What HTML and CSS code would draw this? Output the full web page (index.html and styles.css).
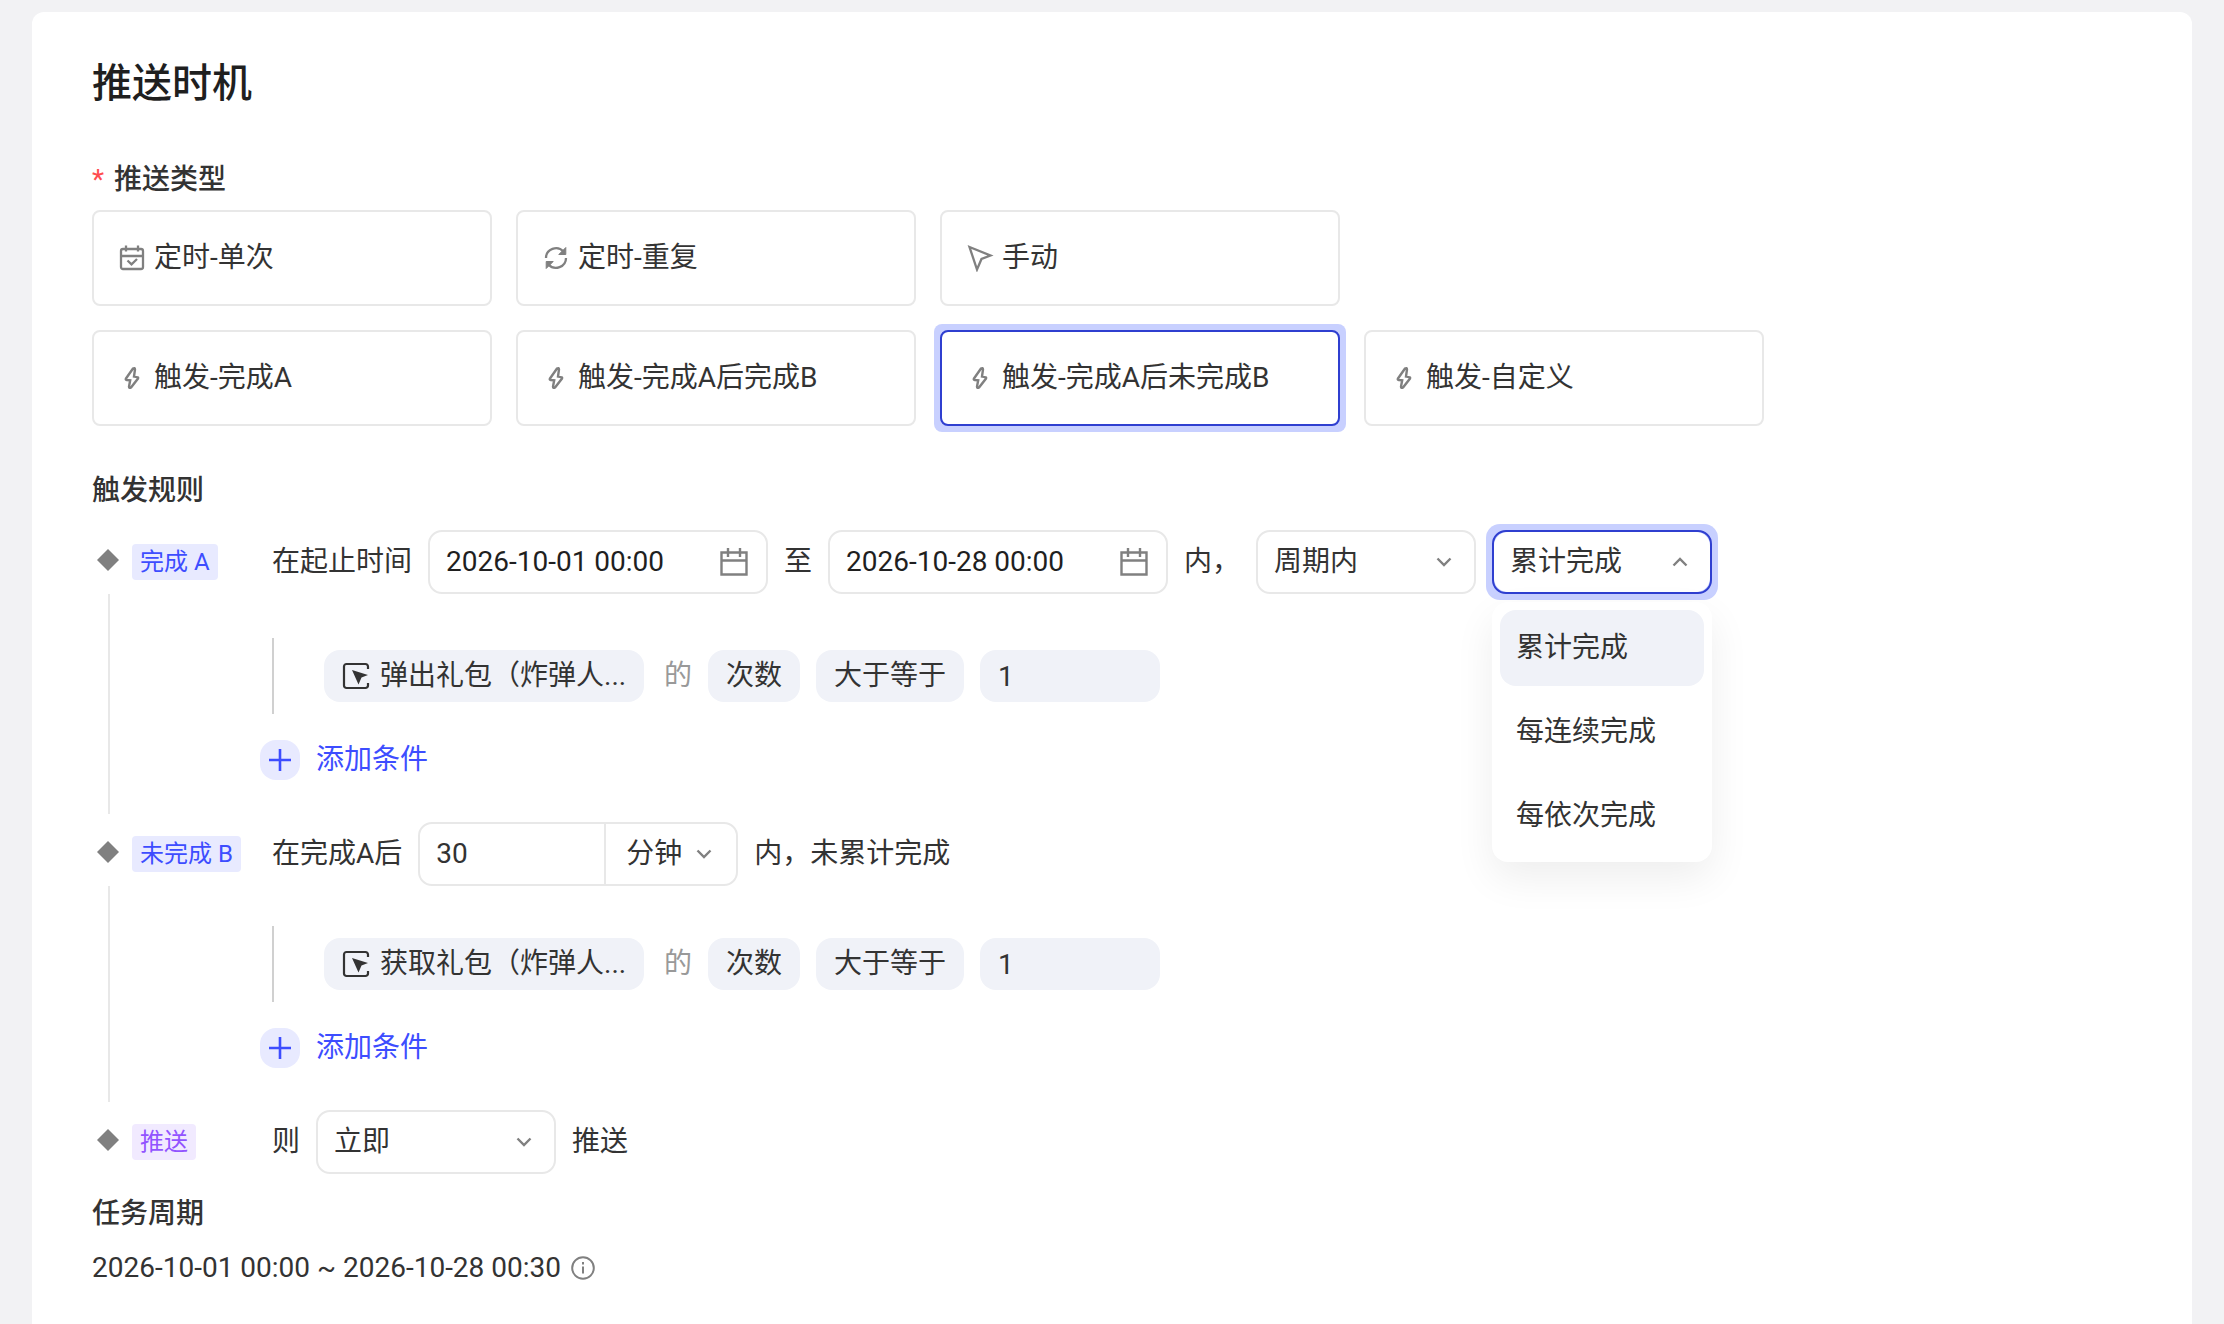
FILE: index.html
```html
<!DOCTYPE html>
<html lang="zh-CN">
<head>
<meta charset="utf-8">
<meta name="viewport" content="width=device-width, initial-scale=1">
<title>推送时机</title>
<link rel="stylesheet" href="styles.css">
</head>
<body>
<svg class="sprite" aria-hidden="true">
  <symbol id="i-calendar-check" viewBox="0 0 28 28"><path stroke-width="2.3" d="M5 5h18a2 2 0 0 1 2 2V23a2 2 0 0 1-2 2H5a2 2 0 0 1-2-2V7a2 2 0 0 1 2-2zM3 12h22M8 1.500v6M20 1.500v6M9.500 16.500l4 3.800 5.500-5.300"/></symbol>
  <symbol id="i-repeat" viewBox="0 0 28 28"><path stroke-width="2.3" d="M4 14A10 9.800 0 0 1 21.500 7.500M24 14A10 9.800 0 0 1 6.500 20.500"/><path class="head" stroke-width="1" d="M23.800 3.500v7h-7zM4.200 24.500v-7h7z"/></symbol>
  <symbol id="i-cursor" viewBox="0 0 28 28"><path stroke-width="2.3" d="M3.500 3l21 8.500-9 3.500-4.500 10.500z"/></symbol>
  <symbol id="i-bolt" viewBox="0 0 28 28"><path stroke-width="2.400" d="M15 4.500L8 14.500q-.8 1.300.7 1.500l3.500.3L11 22.500q0 2.200 2 1L20 14.500q.6-1.200-.8-1.400l-3.200-.6L17 5.500q0-2.200-2-1z"/></symbol>
  <symbol id="i-calendar" viewBox="0 0 28 28"><path stroke-width="2.400" d="M1.500 4.500h25v22h-25zM1.500 12.500h25M8 0v9M20 0v9"/></symbol>
  <symbol id="i-chevron" viewBox="0 0 16 16"><path stroke-width="2.400" d="M1.500 4.500L8 11l6.500-6.500"/></symbol>
  <symbol id="i-event" viewBox="0 0 28 28"><path stroke-width="2.200" d="M26 7V4.500a2.500 2.500 0 0 0-2.500-2.500h-19A2.500 2.500 0 0 0 2 4.500v19A2.500 2.500 0 0 0 4.500 26h19a2.500 2.500 0 0 0 2.500-2.500V21"/><path class="solid" d="M10 8l16 5-6.500 2.500-3 7z"/></symbol>
  <symbol id="i-plus" viewBox="0 0 24 24"><path stroke-width="2.600" d="M12 1v22M1 12h22"/></symbol>
  <symbol id="i-info" viewBox="0 0 24 24"><circle cx="12" cy="12" r="10.800"/><path d="M12 10.500v7M12 6v2.500"/></symbol>
  <symbol id="i-diamond" viewBox="0 0 32 32"><path d="M16 3l11 11-11 11L5 14z"/></symbol>
</svg>

<main class="panel">
  <h1 class="panel-title">推送时机</h1>

  <form>
    <fieldset class="types">
      <legend class="section-title"><span class="required">*</span>推送类型</legend>
      <div class="type-row">
        <label class="type"><input type="radio" name="type"><svg class="icon"><use href="#i-calendar-check"/></svg>定时-单次</label>
        <label class="type"><input type="radio" name="type"><svg class="icon"><use href="#i-repeat"/></svg>定时-重复</label>
        <label class="type"><input type="radio" name="type"><svg class="icon"><use href="#i-cursor"/></svg>手动</label>
      </div>
      <div class="type-row">
        <label class="type"><input type="radio" name="type"><svg class="icon"><use href="#i-bolt"/></svg>触发-完成A</label>
        <label class="type"><input type="radio" name="type"><svg class="icon"><use href="#i-bolt"/></svg>触发-完成A后完成B</label>
        <label class="type"><input type="radio" name="type" checked><svg class="icon"><use href="#i-bolt"/></svg>触发-完成A后未完成B</label>
        <label class="type"><input type="radio" name="type"><svg class="icon"><use href="#i-bolt"/></svg>触发-自定义</label>
      </div>
    </fieldset>

    <h2 class="section-title rules-title">触发规则</h2>

    <section class="step">
      <div class="marker"><svg class="diamond"><use href="#i-diamond"/></svg><span class="tag">完成 A</span></div>
      <div class="line-row">
        <label for="start">在起止时间</label>
        <span class="field date"><input id="start" type="text" value="2026-10-01 00:00"><svg class="icon"><use href="#i-calendar"/></svg></span>
        <label for="end">至</label>
        <span class="field date"><input id="end" type="text" value="2026-10-28 00:00"><svg class="icon"><use href="#i-calendar"/></svg></span>
        <label for="range">内，</label>
        <span class="field choice"><select id="range"><option>周期内</option></select><svg class="chevron"><use href="#i-chevron"/></svg></span>
        <span class="field choice open">
          <select aria-label="完成方式"><option>累计完成</option><option>每连续完成</option><option>每依次完成</option></select><svg class="chevron"><use href="#i-chevron"/></svg>
          <ul class="menu" role="listbox" aria-label="完成方式">
            <li role="option" aria-selected="true">累计完成</li>
            <li role="option" aria-selected="false">每连续完成</li>
            <li role="option" aria-selected="false">每依次完成</li>
          </ul>
        </span>
      </div>
      <div class="rail"></div>
      <div class="body body-first">
        <div class="condition">
          <button type="button" class="pill event"><svg class="icon"><use href="#i-event"/></svg>弹出礼包（炸弹人...</button>
          <span class="of">的</span>
          <button type="button" class="pill">次数</button>
          <button type="button" class="pill">大于等于</button>
          <input class="pill value" type="text" value="1" aria-label="次数值">
        </div>
        <button type="button" class="add"><span class="add-icon"><svg><use href="#i-plus"/></svg></span>添加条件</button>
      </div>
    </section>

    <section class="step">
      <div class="marker"><svg class="diamond"><use href="#i-diamond"/></svg><span class="tag">未完成 B</span></div>
      <div class="line-row">
        <label for="delay">在完成A后</label>
        <span class="field combo">
          <input id="delay" type="text" value="30">
          <span class="unit"><select aria-label="时间单位"><option>分钟</option></select><svg class="chevron"><use href="#i-chevron"/></svg></span>
        </span>
        <span>内，未累计完成</span>
      </div>
      <div class="rail"></div>
      <div class="body">
        <div class="condition">
          <button type="button" class="pill event"><svg class="icon"><use href="#i-event"/></svg>获取礼包（炸弹人...</button>
          <span class="of">的</span>
          <button type="button" class="pill">次数</button>
          <button type="button" class="pill">大于等于</button>
          <input class="pill value" type="text" value="1" aria-label="次数值">
        </div>
        <button type="button" class="add"><span class="add-icon"><svg><use href="#i-plus"/></svg></span>添加条件</button>
      </div>
    </section>

    <section class="step">
      <div class="marker"><svg class="diamond"><use href="#i-diamond"/></svg><span class="tag tag-push">推送</span></div>
      <div class="line-row">
        <label for="when">则</label>
        <span class="field choice wide"><select id="when"><option>立即</option></select><svg class="chevron"><use href="#i-chevron"/></svg></span>
        <span>推送</span>
      </div>
    </section>

    <h2 class="section-title period-title">任务周期</h2>
    <p class="period">2026-10-01 00:00 ~ 2026-10-28 00:30<svg class="info"><use href="#i-info"/></svg></p>
  </form>
</main>
</body>
</html>
```
FILE: styles.css
```css
:root {
  --ink: #333;
  --muted: #808080;
  --border: #e8e8e8;
  --blue: #3d4dff;
  --blue-deep: #2f3fd0;
  --ring: #c8d0ff;
  --fill: #f0f2f8;
}

* { box-sizing: border-box; }

body {
  margin: 0;
  padding: 12px 32px 0;
  background: #f2f2f4;
  color: var(--ink);
  font: 28px/44px Roboto, "Noto Sans CJK SC", sans-serif;
}

h1, h2, p, ul, fieldset, legend { margin: 0; padding: 0; border: 0; }

input, select, button {
  margin: 0;
  padding: 0;
  border: 0;
  background: none;
  color: inherit;
  font: inherit;
  appearance: none;
  outline: none;
}

svg { flex: none; fill: none; stroke: var(--muted); stroke-width: 2; }
.sprite { position: absolute; width: 0; height: 0; }
.solid { fill: var(--ink); stroke: none; }
.head { fill: var(--muted); }
.icon { width: 28px; height: 28px; }

.panel {
  min-height: calc(100vh - 12px);
  padding: 44px 60px 16px;
  border-radius: 12px 12px 0 0;
  background: #fff;
}

.panel-title {
  margin-bottom: 46px;
  color: #1f1f1f;
  font-size: 40px;
  line-height: 56px;
  font-weight: 500;
}

.section-title { font-size: 28px; line-height: 44px; font-weight: 500; }
.required { margin-right: 10px; color: #ff4d4f; font-weight: 400; }

.type-row { display: flex; flex-wrap: wrap; gap: 24px; margin-top: 24px; }
legend + .type-row { margin-top: 8px; }

.type {
  position: relative;
  display: flex;
  align-items: center;
  gap: 8px;
  width: 400px;
  height: 96px;
  padding: 0 24px;
  border: 2px solid var(--border);
  border-radius: 8px;
  background: #fff;
}
.type input { position: absolute; opacity: 0; }
.type:has(:checked) { border-color: var(--blue-deep); }

/* focus halo behind the selected card and the open drop-down */
form { position: relative; z-index: 0; }
.type:has(:checked)::before,
.open::before {
  content: "";
  position: absolute;
  inset: -8px;
  z-index: -2;
  border-radius: 8px;
  background: var(--ring);
}
.type:has(:checked)::after,
.open::after {
  content: "";
  position: absolute;
  inset: 0;
  z-index: -1;
  border-radius: 6px;
  background: #fff;
}
.type:has(:checked), .open { background: none; }
.open::before, .open::after { border-radius: 14px; }

.rules-title { margin: 43px 0 17px; }

.step { display: grid; grid-template-columns: 180px 1fr; }
.marker { display: flex; align-items: center; gap: 8px; }
.diamond { width: 32px; height: 32px; fill: var(--muted); stroke: none; }

.tag {
  padding: 0 8px;
  border-radius: 4px;
  background: #e8eaff;
  color: var(--blue);
  font-size: 24px;
  line-height: 36px;
  white-space: nowrap;
}
.tag-push { background: #f1eaff; color: #9254ff; }

.line-row { display: flex; align-items: center; gap: 16px; }

.field {
  position: relative;
  display: flex;
  align-items: center;
  height: 64px;
  border: 2px solid var(--border);
  border-radius: 14px;
}
.date { width: 340px; padding: 0 18px 0 16px; color: #1f1f1f; }
.date input { flex: 1; min-width: 0; }

.choice { width: 220px; }
.choice select { width: 100%; height: 100%; padding: 0 48px 0 16px; }
.wide { width: 240px; }
.chevron { width: 16px; height: 16px; }
.choice .chevron { position: absolute; right: 22px; pointer-events: none; }
.open { border-color: var(--blue-deep); }
.open .chevron { transform: rotate(180deg); }

.menu {
  position: absolute;
  top: 70px;
  left: -2px;
  right: -2px;
  display: grid;
  gap: 8px;
  padding: 8px;
  border-radius: 16px;
  background: #fff;
  box-shadow: 0 16px 40px rgba(0, 0, 0, .07);
  list-style: none;
}
.menu li { padding: 16px; border-radius: 16px; }
.menu [aria-selected="true"] { background: var(--fill); }

.combo > input { width: 184px; padding: 0 16px; }
.unit {
  display: flex;
  align-items: center;
  gap: 14px;
  height: 100%;
  padding: 0 24px 0 20px;
  border-left: 2px solid var(--border);
}
.unit select { width: 56px; }

.rail { width: 2px; margin: 0 0 8px 16px; background: var(--border); }
.body { padding: 40px 0 42px; }
.body-first { padding-top: 44px; }

.condition {
  display: flex;
  align-items: center;
  gap: 16px;
  height: 76px;
  padding-left: 50px;
  border-left: 2px solid #d0d0d0;
}
.pill {
  height: 52px;
  padding: 0 18px;
  border-radius: 16px;
  background: var(--fill);
  line-height: 44px;
  white-space: nowrap;
}
.event { display: flex; align-items: center; gap: 10px; width: 320px; }
.event svg { stroke: var(--ink); }
.of { margin-left: 4px; color: #999; }
.value { width: 180px; }

.add {
  display: flex;
  align-items: center;
  gap: 16px;
  margin: 26px 0 0 -12px;
  color: var(--blue);
  line-height: 40px;
}
.add-icon {
  display: grid;
  place-items: center;
  width: 40px;
  height: 40px;
  border-radius: 16px;
  background: #e8eaff;
}
.add-icon svg { width: 24px; height: 24px; stroke: var(--blue); }

.period-title { margin: 18px 0 10px; }
.period { display: flex; align-items: center; gap: 10px; }
.info { width: 24px; height: 24px; }
```
